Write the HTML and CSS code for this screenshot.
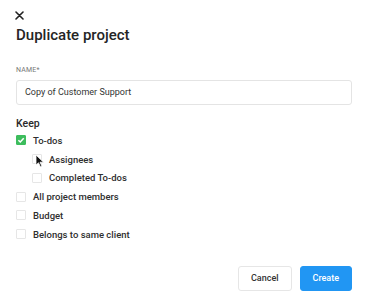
FILE: index.html
```html
<!DOCTYPE html>
<html lang="en">
<head>
    <meta charset="UTF-8">
    <title>Duplicate project</title>
    <link rel="stylesheet" href="styles.css">
</head>
<body>
    <div class="dialog">
        <button class="close" aria-label="Close">
            <svg width="9" height="9" viewBox="0 0 9 9"><path d="M1 1L8 8M8 1L1 8" stroke="#222" stroke-width="1.6" stroke-linecap="round"/></svg>
        </button>
        <h1>Duplicate project</h1>

        <label class="field-label">Name*</label>
        <div class="input">Copy of Customer Support</div>

        <h2>Keep</h2>
        <ul class="options">
            <li><span class="box checked"><svg width="8" height="8" viewBox="0 0 8 8"><path d="M1.4 4.2L3.3 6L6.7 2.2" fill="none" stroke="#fff" stroke-width="1.5"/></svg></span>To-dos</li>
            <li class="sub"><span class="box"></span>Assignees
                <svg class="cursor" width="10" height="14" viewBox="0 0 10 14"><path d="M1 1L1 11L3.5 8.8L5.5 13L7 12.3L5 8.2L8.5 8.2Z" fill="#111" stroke="#fff" stroke-width="0.8"/></svg>
            </li>
            <li class="sub"><span class="box"></span>Completed To-dos</li>
            <li><span class="box"></span>All project members</li>
            <li><span class="box"></span>Budget</li>
            <li><span class="box"></span>Belongs to same client</li>
        </ul>

        <div class="actions">
            <button class="btn">Cancel</button>
            <button class="btn primary">Create</button>
        </div>
    </div>
</body>
</html>
```

FILE: styles.css
```css
body {
    margin: 0;
    background: #fff;
    font-family: Roboto, "Liberation Sans", sans-serif;
    color: #2a2a2a;
}
.dialog {
    position: relative;
    width: 336px;
    padding: 10px 16px 0 16px;
}
.close {
    display: block;
    border: none;
    background: none;
    padding: 0;
    margin: 1px 0 0 -1px;
    width: 9px;
    height: 9px;
    line-height: 0;
}
h1 {
    font-size: 15px;
    font-weight: 500;
    margin: 6px 0 0 0;
    color: #252525;
}
.field-label {
    display: block;
    margin-top: 22px;
    font-size: 7px;
    text-transform: uppercase;
    color: #777;
    letter-spacing: 0.2px;
}
.input {
    margin-top: 6px;
    height: 23px;
    border: 1px solid #e4e4e4;
    border-radius: 3px;
    box-sizing: content-box;
    padding: 0 8px;
    font-size: 9px;
    line-height: 23px;
    color: #333;
}
h2 {
    font-size: 10.5px;
    font-weight: 500;
    margin: 12px 0 0 0;
    color: #2a2a2a;
}
.options {
    list-style: none;
    margin: 1px 0 0 0;
    padding: 0;
}
.options li {
    position: relative;
    display: flex;
    align-items: center;
    height: 18.75px;
    font-size: 9.5px;
    font-weight: 500;
    color: #2f2f2f;
}
.options li.sub {
    padding-left: 16px;
}
.box {
    width: 8px;
    height: 8px;
    border: 1px solid #e6e6e6;
    border-radius: 1px;
    margin-right: 7px;
    display: flex;
    align-items: center;
    justify-content: center;
}
.box.checked {
    background: #3dbd5d;
    border-color: #3dbd5d;
}
.cursor {
    position: absolute;
    left: 19px;
    top: 4px;
}
.actions {
    display: flex;
    justify-content: flex-end;
    gap: 8px;
    margin-top: 22px;
}
.btn {
    height: 25px;
    padding: 0 12px;
    border: 1px solid #e6e6e6;
    border-radius: 3px;
    background: #fff;
    font-family: Roboto, "Liberation Sans", sans-serif;
    font-size: 9px;
    font-weight: 500;
    color: #333;
    min-width: 52px;
}
.btn.primary {
    background: #2196f3;
    border-color: #2196f3;
    color: #fff;
}
```
